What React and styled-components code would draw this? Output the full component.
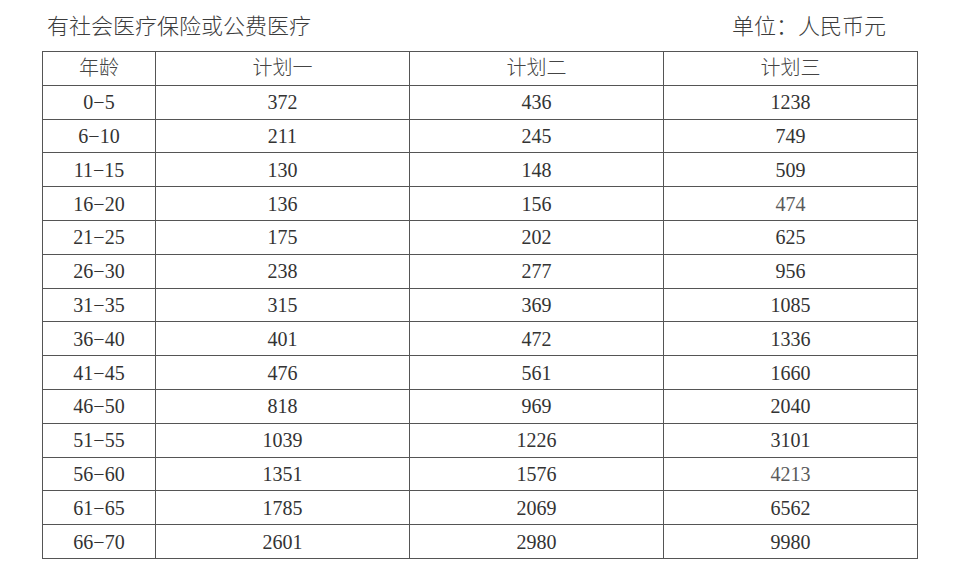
import React from 'react';
import styled, { createGlobalStyle } from 'styled-components';

const GlobalStyle = createGlobalStyle`
  body {
    margin: 0;
    background: #fff;
    font-family: "Liberation Serif", "Noto Sans CJK SC", serif;
    color: #333;
  }
`;

const Page = styled.div`
  width: 955px;
  height: 583px;
  padding: 0 0 0 42px;
  box-sizing: border-box;
`;

const TitleBar = styled.div`
  width: 875px;
  height: 51px;
  padding: 0 31px 4px 5px;
  box-sizing: border-box;

  display: flex;
  align-items: center;
  justify-content: space-between;

  font-size: 22px;
  font-weight: 300;
  color: #3c3c3c;
`;

const Table = styled.table`
  width: 875px;
  border-collapse: collapse;
  table-layout: fixed;
  border: 1px solid #222;
`;

const Col = styled.col`
  width: ${props => props.$w}px;
`;

const Row = styled.tr`
  height: 33.8px;
`;

const Cell = styled.td`
  padding: 0;
  border: 1px solid #555;
  text-align: center;
  vertical-align: middle;
  font-size: 20px;
  line-height: 1;
  color: ${props => (props.$light ? '#5a5a5a' : '#333')};
`;

const HeadCell = styled(Cell).attrs({ as: 'th' })`
  font-weight: 300;
  color: #444;
`;

const rows = [
  ['0-5', '372', '436', '1238'],
  ['6-10', '211', '245', '749'],
  ['11-15', '130', '148', '509'],
  ['16-20', '136', '156', '474'],
  ['21-25', '175', '202', '625'],
  ['26-30', '238', '277', '956'],
  ['31-35', '315', '369', '1085'],
  ['36-40', '401', '472', '1336'],
  ['41-45', '476', '561', '1660'],
  ['46-50', '818', '969', '2040'],
  ['51-55', '1039', '1226', '3101'],
  ['56-60', '1351', '1576', '4213'],
  ['61-65', '1785', '2069', '6562'],
  ['66-70', '2601', '2980', '9980'],
];

const lightValues = ['474', '4213'];

export default function App() {
  return (
    <Page>
      <GlobalStyle />
      <TitleBar>
        <span>有社会医疗保险或公费医疗</span>
        <span>单位：人民币元</span>
      </TitleBar>
      <Table>
        <colgroup>
          <Col $w={113} />
          <Col $w={254} />
          <Col $w={254} />
          <Col $w={254} />
        </colgroup>
        <thead>
          <Row>
            <HeadCell>年龄</HeadCell>
            <HeadCell>计划一</HeadCell>
            <HeadCell>计划二</HeadCell>
            <HeadCell>计划三</HeadCell>
          </Row>
        </thead>
        <tbody>
          {rows.map(r => (
            <Row key={r[0]}>
              {r.map((v, i) => (
                <Cell key={i} $light={i === 3 && lightValues.includes(v)}>
                  {v.replace('-', '−')}
                </Cell>
              ))}
            </Row>
          ))}
        </tbody>
      </Table>
    </Page>
  );
}
